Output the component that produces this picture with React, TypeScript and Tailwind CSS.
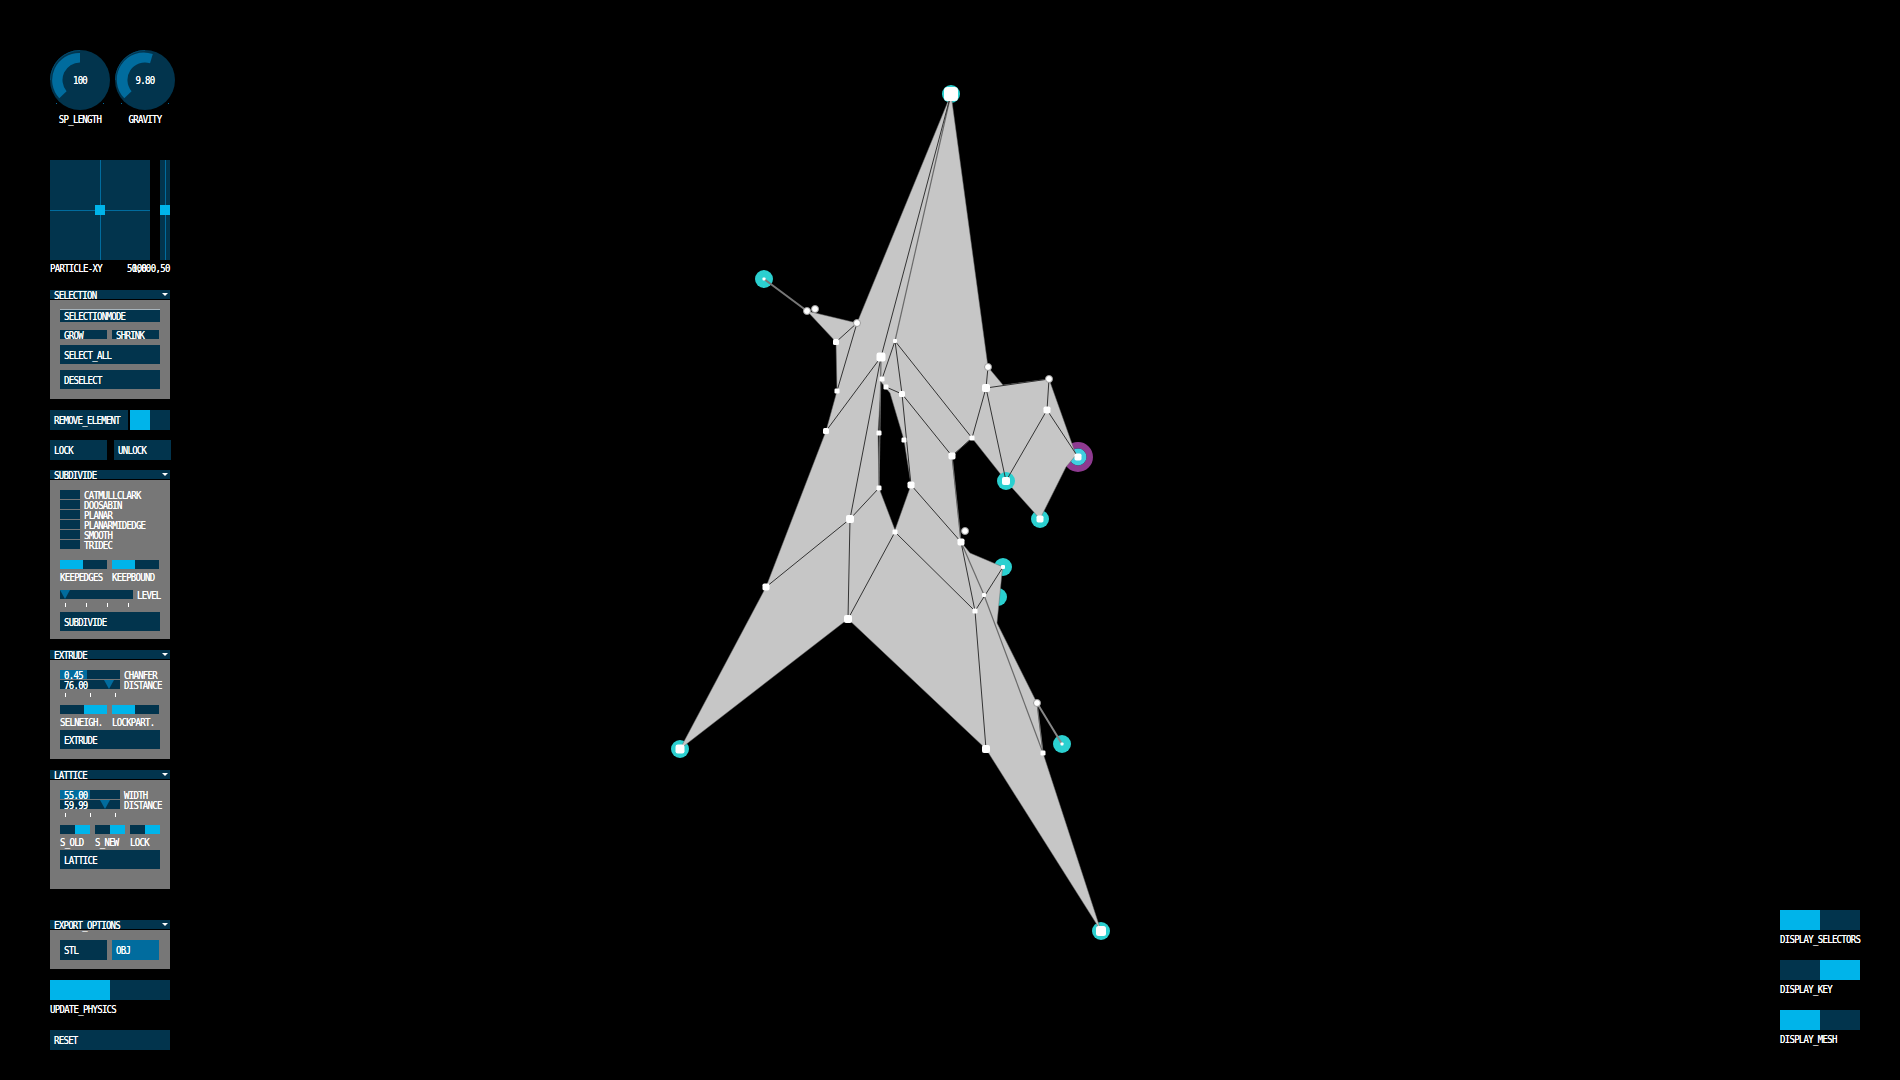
const Txt = "inline-block scale-y-[1.18] font-['DejaVu_Sans_Mono',monospace] text-[9px] leading-[10px] tracking-[-0.7px] text-white whitespace-nowrap [text-shadow:0_0_0.5px_#fff]"

// mesh vertices, in page pixels
const V: Record<string, [number, number]> = {
  T: [951, 94], L: [764, 279], A: [807, 311], A2: [815, 309], B: [857, 323], C: [836, 342],
  D: [895, 341], E: [881, 357], F: [988, 367], G: [986, 388], H: [1049, 379], I: [837, 391],
  J: [882, 379], K: [886, 387], M: [902, 394], N: [826, 431], O: [879, 433], P: [904, 440],
  Q: [972, 438], R: [952, 456], S: [1047, 410], U: [1078, 457], W: [1006, 481], W2: [1040, 519],
  X: [879, 488], Y: [911, 485], Z: [850, 519], AA: [895, 532], AB: [965, 531], AC: [961, 542],
  AD: [1003, 567], AE: [984, 595], AF: [998, 597], AG: [975, 611], AH: [848, 619], AI: [766, 587],
  BL: [680, 749], AJ: [986, 749], AK: [1043, 753], AL: [1037, 703], AM: [1062, 744], BR: [1101, 931],
}

const outline =
  "M951 94 L857 323 L807 311 L836 342 L837 391 L826 431 L766 587 L680 749 L848 619 L986 749 L1101 931 L1043 753 L1037 703 L997 623 L1002 573 L1003 567 L970 553 L961 542 L952 456 L972 438 L1006 481 L1040 519 L1066 467 L1076 455 L1049 379 L1003 385 L988 367 Z " +
  "M881 382 L890 393 L904 440 L911 485 L895 530 L879 488 L878 433 Z"

const darkEdges = [
  "T-E", "B-C", "B-I", "E-N", "E-Z", "D-M", "D-Q", "K-M", "M-R", "M-Y", "G-Q", "G-W", "G-H", "F-G", "H-S", "S-W",
  "S-U", "Q-R", "Y-AC", "X-Z", "Z-AH", "Z-AI", "AA-AH", "AA-AG", "AC-AG", "AD-AG", "AG-AJ", "D-J",
]
const greyEdges = ["T-D", "E-X", "R-AC", "AC-AE", "AE-AK", "AK-AL"]

const plainNodes: [string, number][] = [
  ["C", 6], ["D", 4], ["E", 9], ["G", 8], ["I", 5], ["J", 5], ["K", 5],
  ["M", 6], ["N", 6], ["O", 5], ["P", 5], ["Q", 5], ["R", 7], ["S", 7], ["X", 5], ["Y", 7], ["Z", 8], ["AA", 5],
  ["AC", 7], ["AE", 4], ["AG", 5], ["AH", 8], ["AI", 7], ["AJ", 8], ["AK", 5],
]
const roundNodes = ["A", "A2", "B", "F", "H", "AB", "AL"]
const selectors: [string, number][] = [
  ["T", 14], ["L", 3], ["W", 8], ["W2", 7], ["AD", 4], ["AM", 3], ["BL", 9], ["BR", 10],
]

function Edge({ id, stroke, width }: { id: string; stroke: string; width: number }) {
  const [a, b] = id.split("-")
  return <line x1={V[a][0]} y1={V[a][1]} x2={V[b][0]} y2={V[b][1]} stroke={stroke} strokeWidth={width} />
}

function Node({ id, size }: { id: string; size: number }) {
  return <rect x={V[id][0] - size / 2} y={V[id][1] - size / 2} width={size} height={size} rx={size / 4} fill="#fff" />
}

function Mesh() {
  return (
    <svg className="absolute inset-0" width="1900" height="1080" viewBox="0 0 1900 1080">
      <circle cx={V.U[0]} cy={V.U[1]} r="11.75" fill="none" stroke="#8e3a90" strokeWidth="6.5" />
      <circle cx={V.U[0]} cy={V.U[1]} r="8.5" fill="#40cfe0" />
      {selectors.map(([id]) => id !== "T" && id !== "W" && (
        <circle key={id} cx={V[id][0]} cy={V[id][1]} r="9" fill="#2bd0d0" />
      ))}
      <circle cx={V.AF[0]} cy={V.AF[1]} r="9" fill="#2bd0d0" />
      <circle cx={V.T[0]} cy={V.T[1]} r="9" fill="#2bd0d0" />
      <path d={outline} fill="#c6c6c6" fillRule="evenodd" stroke="#666" strokeWidth="0.5" />
      <circle cx={V.W[0]} cy={V.W[1]} r="9" fill="#2bd0d0" />
      <line x1={V.L[0]} y1={V.L[1]} x2={V.A[0]} y2={V.A[1]} stroke="#777" strokeWidth="2" />
      <line x1={V.AL[0]} y1={V.AL[1]} x2={V.AM[0]} y2={V.AM[1]} stroke="#888" strokeWidth="2" />
      {greyEdges.map((id) => <Edge key={id} id={id} stroke="#6a6a6a" width={1.2} />)}
      {darkEdges.map((id) => <Edge key={id} id={id} stroke="#333" width={1} />)}
      {roundNodes.map((id) => (
        <circle key={id} cx={V[id][0]} cy={V[id][1]} r="3.5" fill="#fff" stroke="#999" strokeWidth="1" />
      ))}
      {plainNodes.map(([id, size]) => <Node key={id} id={id} size={size} />)}
      {selectors.map(([id, size]) => <Node key={id} id={id} size={size} />)}
      <Node id="U" size={7} />
    </svg>
  )
}

function Knob({ value, label, end }: { value: string; label: string; end: [number, number] }) {
  return (
    <div className="flex flex-col items-center w-[60px]">
      <div className="relative w-[60px] h-[60px]">
        <svg width="60" height="60" viewBox="0 0 60 60" className="block">
          <circle cx="30" cy="30" r="30" fill="#02344d" />
          <path d="M0.5 30 A29.5 29.5 0 0 1 30 0.5" fill="none" stroke="#014a6e" strokeWidth="1" />
          <path d={`M9.3 48.3 A27 27 0 0 1 ${end[0]} ${end[1]} L${30 + (end[0] - 30) * 0.65} ${30 + (end[1] - 30) * 0.65} A17.5 17.5 0 0 0 16.6 41.2 Z`} fill="#016c9e" />
          <rect x="6" y="53" width="1" height="1" fill="#016c9e" />
          <rect x="53" y="53" width="1" height="1" fill="#016c9e" />
        </svg>
        <div className="absolute inset-0 flex items-center justify-center">
          <span className={Txt}>{value}</span>
        </div>
      </div>
      <span className={`${Txt} mt-[4px]`}>{label}</span>
    </div>
  )
}

function Header({ title }: { title: string }) {
  return (
    <div className="h-[9px] bg-[#02344d] flex items-center justify-between pl-[4px] pr-[2px]">
      <span className={Txt}>{title}</span>
      <svg width="6" height="3" viewBox="0 0 6 3" className="block">
        <path d="M0 0h6L3 3z" fill="#fff" />
      </svg>
    </div>
  )
}

function Group({ title, className, children }: { title: string; className: string; children: React.ReactNode }) {
  return (
    <div className="w-[120px]">
      <Header title={title} />
      <div className={`mt-px bg-[#777777] pl-[10px] ${className}`}>{children}</div>
    </div>
  )
}

function Btn({ label, className = "h-[19px]", bg = "bg-[#02344d]" }: { label: string; className?: string; bg?: string }) {
  return (
    <div className={`${bg} flex items-center pl-[4px] ${className}`}>
      <span className={Txt}>{label}</span>
    </div>
  )
}

function Toggle({ w, h, on, right }: { w: string; h: string; on: string; right?: boolean }) {
  return (
    <div className={`bg-[#02344d] flex ${w} ${h} ${right ? "justify-end" : ""}`}>
      <div className={`bg-[#00b4ea] h-full ${on}`} />
    </div>
  )
}

function LabelledToggle({ label, on, right, w }: { label: string; on: string; right?: boolean; w: string }) {
  return (
    <div className={w}>
      <Toggle w="w-full" h="h-[9px]" on={on} right={right} />
      <div className="mt-[3px] h-[10px] flex"><span className={Txt}>{label}</span></div>
    </div>
  )
}

function Ticks({ className, count = 3 }: { className: string; count?: number }) {
  return (
    <div className={`flex justify-between h-[4px] ${className}`}>
      {Array.from({ length: count }, (_, i) => (
        <div key={i} className="w-px h-full bg-white" />
      ))}
    </div>
  )
}

function Slider({ value, label, fill, marker }: { value: string; label: string; fill?: string; marker?: string }) {
  return (
    <div className="flex items-center h-[9px]">
      <div className="relative w-[60px] h-[9px] bg-[#02344d]">
        {fill && <div className={`absolute inset-y-0 left-0 bg-[#016c9e] ${fill}`} />}
        {marker && (
          <svg width="10" height="9" viewBox="0 0 10 9" className={`absolute top-0 ${marker}`}>
            <path d="M0 0h10L5 9z" fill="#016c9e" />
          </svg>
        )}
        <span className={`${Txt} absolute left-[4px] top-0 leading-[9px]`}>{value}</span>
      </div>
      <span className={`${Txt} ml-[4px]`}>{label}</span>
    </div>
  )
}

function SideToggle({ label, right }: { label: string; right?: boolean }) {
  return (
    <div className="w-[80px]">
      <Toggle w="w-full" h="h-[20px]" on="w-[40px]" right={right} />
      <div className="mt-[4px] h-[10px] flex"><span className={Txt}>{label}</span></div>
    </div>
  )
}

const methods = ["CATMULLCLARK", "DOOSABIN", "PLANAR", "PLANARMIDEDGE", "SMOOTH", "TRIDEC"]

export default function App() {
  return (
    <div className="relative w-[1900px] h-[1080px] bg-black overflow-hidden flex justify-between">
      <Mesh />

      <div className="relative w-[122px] ml-[50px] pt-[50px] flex flex-col">
        <div className="flex gap-[5px]">
          <Knob value="100" label="SP_LENGTH" end={[30, 3]} />
          <Knob value="9.80" label="GRAVITY" end={[37.8, 4.1]} />
        </div>

        <div className="mt-[36px] flex gap-[10px]">
          <div className="relative w-[100px] h-[100px] bg-[#02344d]">
            <div className="absolute left-[50px] inset-y-0 w-px bg-[#016c9e]" />
            <div className="absolute top-[50px] inset-x-0 h-px bg-[#016c9e]" />
            <div className="absolute left-[45px] top-[45px] w-[10px] h-[10px] bg-[#00b4ea]" />
          </div>
          <div className="relative w-[10px] h-[100px] bg-[#02344d]">
            <div className="absolute left-[5px] inset-y-0 w-px bg-[#016c9e]" />
            <div className="absolute left-0 top-[45px] w-[10px] h-[10px] bg-[#00b4ea]" />
          </div>
        </div>
        <div className="relative h-[10px] mt-[3px] w-[120px]">
          <span className={`${Txt} absolute left-0`}>PARTICLE-XY</span>
          <span className={`${Txt} absolute left-[77px]`}>50,00</span>
          <span className={`${Txt} absolute left-[82px]`}>100.0,50</span>
        </div>

        <div className="mt-[17px]">
          <Group title="SELECTION" className="h-[99px] pt-[9px]">
            <div className="w-[100px] h-[13px] bg-[#02344d] border-t border-[#a8b4bc] flex items-center pl-[4px]">
              <span className={Txt}>SELECTIONMODE</span>
            </div>
            <div className="flex gap-[5px] mt-[8px]">
              <Btn label="GROW" className="w-[47px] h-[9px]" />
              <Btn label="SHRINK" className="w-[47px] h-[9px]" />
            </div>
            <Btn label="SELECT_ALL" className="w-[100px] h-[19px] mt-[6px]" />
            <Btn label="DESELECT" className="w-[100px] h-[19px] mt-[6px]" />
          </Group>
        </div>

        <div className="flex gap-[2px] mt-[11px] h-[20px] w-[120px]">
          <Btn label="REMOVE_ELEMENT" className="w-[78px] h-[20px]" />
          <Toggle w="w-[40px]" h="h-[20px]" on="w-[20px]" />
        </div>

        <div className="flex gap-[7px] mt-[10px]">
          <Btn label="LOCK" className="w-[57px] h-[20px]" />
          <Btn label="UNLOCK" className="w-[57px] h-[20px]" />
        </div>

        <div className="mt-[10px]">
          <Group title="SUBDIVIDE" className="h-[159px] pt-[10px]">
            <div className="flex flex-col gap-px">
              {methods.map((m) => (
                <div key={m} className="flex items-center gap-[4px] h-[9px]">
                  <div className="w-[20px] h-[9px] bg-[#02344d]" />
                  <span className={Txt}>{m}</span>
                </div>
              ))}
            </div>
            <div className="flex gap-[5px] mt-[11px]">
              <LabelledToggle label="KEEPEDGES" on="w-[23px]" w="w-[47px]" />
              <LabelledToggle label="KEEPBOUND" on="w-[23px]" w="w-[47px]" />
            </div>
            <div className="flex items-center mt-[8px] h-[9px]">
              <div className="relative w-[73px] h-[9px] bg-[#02344d]">
                <svg width="10" height="9" viewBox="0 0 10 9" className="absolute left-0 top-0">
                  <path d="M0 0h10L5 9z" fill="#016c9e" />
                </svg>
              </div>
              <span className={`${Txt} ml-[4px]`}>LEVEL</span>
            </div>
            <Ticks count={4} className="mt-[4px] ml-[5px] w-[64px]" />
            <Btn label="SUBDIVIDE" className="w-[100px] h-[19px] mt-[5px]" />
          </Group>
        </div>

        <div className="mt-[11px]">
          <Group title="EXTRUDE" className="h-[99px] pt-[10px]">
            <div className="flex flex-col gap-px">
              <Slider value="0.45" label="CHANFER" fill="w-[27px]" />
              <Slider value="76.00" label="DISTANCE" marker="left-[44px]" />
            </div>
            <Ticks className="mt-[4px] ml-[5px] w-[51px]" />
            <div className="flex gap-[5px] mt-[8px]">
              <LabelledToggle label="SELNEIGH." on="w-[23px]" right w="w-[47px]" />
              <LabelledToggle label="LOCKPART." on="w-[23px]" w="w-[47px]" />
            </div>
            <Btn label="EXTRUDE" className="w-[100px] h-[19px] mt-[3px]" />
          </Group>
        </div>

        <div className="mt-[11px]">
          <Group title="LATTICE" className="h-[109px] pt-[10px]">
            <div className="flex flex-col gap-px">
              <Slider value="55.00" label="WIDTH" fill="w-[30px]" />
              <Slider value="59.99" label="DISTANCE" marker="left-[40px]" />
            </div>
            <Ticks className="mt-[4px] ml-[5px] w-[51px]" />
            <div className="flex gap-[5px] mt-[8px]">
              <LabelledToggle label="S_OLD" on="w-[15px]" right w="w-[30px]" />
              <LabelledToggle label="S_NEW" on="w-[15px]" right w="w-[30px]" />
              <LabelledToggle label="LOCK" on="w-[15px]" right w="w-[30px]" />
            </div>
            <Btn label="LATTICE" className="w-[100px] h-[19px] mt-[3px]" />
          </Group>
        </div>

        <div className="mt-[31px]">
          <Group title="EXPORT_OPTIONS" className="h-[39px] pt-[10px]">
            <div className="flex gap-[5px]">
              <Btn label="STL" className="w-[47px] h-[20px]" />
              <Btn label="OBJ" className="w-[47px] h-[20px]" bg="bg-[#016c9e]" />
            </div>
          </Group>
        </div>

        <div className="mt-[11px] w-[120px]">
          <Toggle w="w-full" h="h-[20px]" on="w-[60px]" />
          <div className="mt-[4px] h-[10px] flex"><span className={Txt}>UPDATE_PHYSICS</span></div>
        </div>

        <Btn label="RESET" className="w-[120px] h-[20px] mt-[16px]" />
      </div>

      <div className="relative mr-[40px] pt-[910px] flex flex-col gap-[16px]">
        <SideToggle label="DISPLAY_SELECTORS" />
        <SideToggle label="DISPLAY_KEY" right />
        <SideToggle label="DISPLAY_MESH" />
      </div>
    </div>
  )
}
